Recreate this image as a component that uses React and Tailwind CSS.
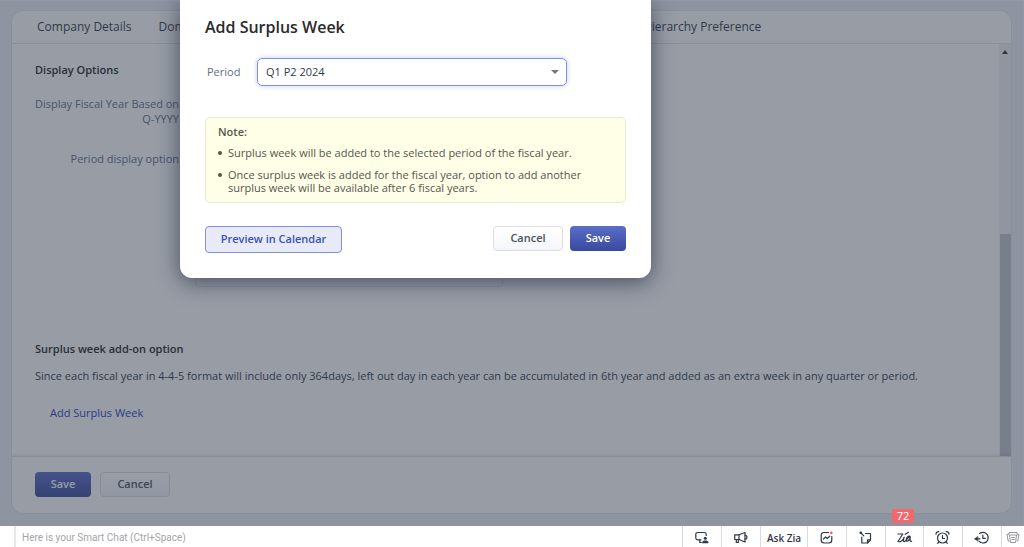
const tabs = [
  "Company Details",
  "Domain Mapping",
  "Fiscal Year",
  "Business Hours",
  "Holidays",
  "Currencies",
  "Hierarchy Preference",
];

function Stroke({ children, className = "" }) {
  return (
    <svg
      viewBox="0 0 16 16"
      className={`h-4 w-4 ${className}`}
      fill="none"
      stroke="currentColor"
      strokeWidth="1.2"
      strokeLinecap="round"
      strokeLinejoin="round"
      aria-hidden="true"
    >
      {children}
    </svg>
  );
}

const ScreenIcon = () => (
  <Stroke>
    <path d="M7 9.800H3.700C2.500 9.800 1.800 9.100 1.800 8V4.300C1.800 3.200 2.500 2.500 3.700 2.500H10.300C11.500 2.500 12.200 3.200 12.200 4.300V5.500" />
    <path d="M5.800 10V12.500H7.500" />
    <circle cx="11.300" cy="8.300" r="1.500" fill="currentColor" stroke="none" />
    <path d="M8.300 13.300V12.300C8.300 11 9.500 10.400 11.300 10.400S14.300 11 14.300 12.300V13.300Z" fill="currentColor" stroke="none" />
  </Stroke>
);

const MegaphoneIcon = () => (
  <Stroke>
    <path d="M1.700 4.800H6L12 2.500V12L6 9.500H1.700Z" />
    <path d="M6 4.800V9.500M3.300 9.800V12.500H5.300V10M12.200 5.300C14.600 5.300 14.600 9.200 12.200 9.200" />
  </Stroke>
);

const ChartIcon = () => (
  <Stroke>
    <path d="M9.500 2.500H5.200C3.200 2.500 2.200 3.500 2.200 5.500V10C2.200 12 3.200 13 5.200 13H9.800C11.800 13 12.800 12 12.800 10V6.500" />
    <path d="M4.500 9L6.600 7L8.300 8.500L10.700 6.200" />
    <circle cx="12.300" cy="2.900" r="1.400" fill="#f0646c" stroke="none" />
  </Stroke>
);

const NoteIcon = () => (
  <Stroke>
    <path d="M7.500 3.500H12.500V10L9.500 13H3.800V7" />
    <path d="M12.500 9.800H9.500V12.800M2.500 2.500L5.800 5.800" />
    <circle cx="2.800" cy="2.800" r="1.300" fill="currentColor" stroke="none" />
  </Stroke>
);

const ZiaIcon = () => (
  <Stroke>
    <path d="M1 4H5.800L1 11.500C3.500 12.500 6 10.500 7.200 7.200C6.300 9.500 6 11.600 7.200 11.600C8.800 11.600 10 8 13 6.300C10.800 5.800 9.200 8 9.200 10C9.400 12.400 12.400 11 13.300 6.800C12.700 10 13 11.800 14.600 11.200" />
    <path d="M8.200 4.300L11.500 2.300" />
  </Stroke>
);

const AlarmIcon = () => (
  <Stroke>
    <circle cx="7.500" cy="8" r="5" />
    <path d="M7.500 5.500V8.500H9.500M1 4.200C1 2.500 2.200 1.500 3.800 1.700M14 4.200C14 2.500 12.800 1.500 11.200 1.700M3.800 12L2.700 13.300M11.200 12L12.300 13.300" />
  </Stroke>
);

const HistoryIcon = () => (
  <Stroke>
    <path d="M5.500 3.500C6.600 2.700 7.800 2.400 9 2.400A5.300 5.300 0 1 1 5 11.200" />
    <path d="M8.800 5V8.300H11.300" />
    <path d="M1 8.800H6" />
    <path d="M3.600 6.500L0.800 8.800L3.600 11.100Z" fill="currentColor" strokeWidth="0.5" />
  </Stroke>
);

const CardsIcon = () => (
  <svg viewBox="0 0 16 16" className="h-4 w-4" fill="none" stroke="currentColor" strokeWidth="0.9" aria-hidden="true">
    <path d="M4.500 5H11.500L10.500 12.500H5.500Z" fill="#fff" />
    <path d="M4.500 11H3.200L2 4.500L4 4M11.500 11H12.800L14 4.500L12 4M4 4.500V2.500H12V4.500M6.200 7.500H9.800M6.400 9.500H9.600" />
  </svg>
);

const tools = [
  { label: "Screen share", width: "w-[39px]", icon: <ScreenIcon /> },
  { label: "Announcements", width: "w-[39px]", icon: <MegaphoneIcon /> },
  { label: "Ask Zia", width: "w-[47px]", text: true },
  { label: "Insights", width: "w-[39px]", icon: <ChartIcon /> },
  { label: "Sticky note", width: "w-[39px]", icon: <NoteIcon /> },
  { label: "Zia", width: "w-[38px]", icon: <ZiaIcon />, badge: 72 },
  { label: "Reminders", width: "w-[39px]", icon: <AlarmIcon /> },
  { label: "Recent items", width: "w-[39px]", icon: <HistoryIcon /> },
];

const primary =
  "h-[25px] w-14 rounded bg-linear-to-b from-[#5a6dc9] to-[#394a9c] text-[11px] font-semibold text-white";
const secondary =
  "h-[25px] w-[70px] rounded border border-[#dcdde6] bg-linear-to-b from-white to-[#f5f6fb] text-[11px] font-semibold text-[#4a5160]";

function SettingsPage() {
  return (
    <div className="flex min-h-0 flex-1 flex-col border-t border-r border-[#f5f7ff] bg-[#edeef5] pt-[9px] pr-[11px] pb-3 pl-[11px]">
      <div className="flex min-h-0 flex-1 flex-col overflow-hidden rounded-xl border border-[#e2e4ec] bg-white">
        <nav className="flex h-[33px] shrink-0 items-center gap-[27px] border-b border-[#e2e4ec] px-[25px]">
          {tabs.map((tab) => (
            <a key={tab} href="#" className="whitespace-nowrap text-xs text-[#313949]">
              {tab}
            </a>
          ))}
        </nav>
        <div className="flex min-h-0 flex-1">
          <main className="min-w-0 flex-1 overflow-hidden px-[23px] pt-[18px]">
            <h2 className="text-[11px] leading-4 font-semibold text-[#222222]">Display Options</h2>
            <dl className="mt-[18px] w-[144px] text-right text-[11px] leading-[15px] text-[#616e88]">
              <dt>
                <span className="whitespace-nowrap">Display Fiscal Year Based on</span> Q-YYYY
              </dt>
              <dt className="mt-[25px]">Period display option</dt>
            </dl>
            <div className="mt-7 ml-[160px] h-[93px] w-[308px] rounded border border-[#e6e8f0]" />
            <h2 className="mt-[54px] text-[11px] leading-4 font-semibold text-[#222222]">
              Surplus week add-on option
            </h2>
            <p className="mt-[11px] text-[11px] leading-4 text-[#313949]">
              Since each fiscal year in 4-4-5 format will include only 364days, left out day in each year can be
              accumulated in 6th year and added as an extra week in any quarter or period.
            </p>
            <button className="mt-[21px] ml-[15px] block text-[11px] leading-4 font-medium text-[#1f3ac4]">
              Add Surplus Week
            </button>
          </main>
          <div className="flex w-3 flex-col items-center bg-[#f0f1f5] pt-[6px]">
            <svg viewBox="0 0 6 4" className="h-1 w-1.5" aria-hidden="true">
              <path d="M0 4L3 0L6 4Z" fill="#333" />
            </svg>
            <div className="mt-auto h-[222px] w-[11px] bg-[#c0c2c9]" />
          </div>
        </div>
        <footer className="flex h-[57px] shrink-0 items-center gap-[9px] border-t border-[#dcdee8] px-[23px] pb-0.5 shadow-[0_-1px_4px_rgba(0,0,0,0.12)]">
          <button className={primary}>Save</button>
          <button className={secondary}>Cancel</button>
        </footer>
      </div>
    </div>
  );
}

function SurplusWeekDialog() {
  return (
    <div
      role="dialog"
      aria-labelledby="dialog-title"
      className="ml-[180px] w-full max-w-[471px] rounded-b-xl bg-white px-[25px] pt-4 pb-[25px] shadow-[0_4px_22px_rgba(30,35,60,0.65)]"
    >
      <h1 id="dialog-title" className="text-base leading-[22px] font-semibold text-[#2a2a2a]">
        Add Surplus Week
      </h1>
      <div className="mt-5 flex items-center">
        <label htmlFor="period" className="w-[52px] pl-0.5 text-[11px] text-[#616e88]">
          Period
        </label>
        <div className="relative w-[310px]">
          <select
            id="period"
            className="block h-[28px] w-full appearance-none rounded-[5px] border border-[#7f92e8] bg-white px-2 text-[11px] text-[#313949] shadow-[0_0_5px_rgba(90,115,240,0.35)] outline-none"
          >
            <option>Q1 P2 2024</option>
          </select>
          <svg
            viewBox="0 0 8 4"
            className="pointer-events-none absolute top-3 right-2 h-1 w-2"
            aria-hidden="true"
          >
            <path d="M0 0H8L4 4Z" fill="#777" />
          </svg>
        </div>
      </div>
      <section className="mt-[31px] rounded-[5px] border border-[#e9ebc9] bg-[#ffffe8] px-3 pt-[7px] pb-2 text-[11px] leading-[13px] text-[#55564a]">
        <h2 className="font-semibold">Note:</h2>
        <ul className="mt-2 space-y-[9px]">
          <li className="flex gap-[6px]">
            <span className="mt-[5px] h-1 w-1 shrink-0 rounded-full bg-[#55564a]" />
            Surplus week will be added to the selected period of the fiscal year.
          </li>
          <li className="flex gap-[6px] pr-5">
            <span className="mt-[5px] h-1 w-1 shrink-0 rounded-full bg-[#55564a]" />
            Once surplus week is added for the fiscal year, option to add another surplus week will be available
            after 6 fiscal years.
          </li>
        </ul>
      </section>
      <div className="mt-[23px] flex items-start gap-[7px]">
        <button className="mr-auto h-[27px] w-[137px] rounded border border-[#7f90dd] bg-[#e8ebf7] text-[11px] font-semibold text-[#3a50b8]">
          Preview in Calendar
        </button>
        <button className={secondary}>Cancel</button>
        <button className={primary}>Save</button>
      </div>
    </div>
  );
}

function ChatBar() {
  return (
    <div className="flex h-[21px] shrink-0 bg-white">
      <div className="w-4 border-r-2 border-[#e8e8ea]" />
      <input
        aria-label="Smart Chat"
        placeholder="Here is your Smart Chat (Ctrl+Space)"
        className="min-w-0 flex-1 px-1.5 pt-0.5 font-['Roboto','Liberation_Sans',sans-serif] text-[10px] outline-none placeholder:text-[#a4a4a8]"
      />
      {tools.map((tool) => (
        <button
          key={tool.label}
          aria-label={tool.label}
          className={`relative flex items-center justify-center border-l border-[#d9dae0] pt-[3px] text-[#2f3646] ${tool.width}`}
        >
          {tool.text ? <span className="text-[10px] font-semibold whitespace-nowrap">{tool.label}</span> : tool.icon}
          {tool.badge && (
            <span className="absolute -top-[17px] left-1.5 flex h-[14px] w-[22px] items-center justify-center rounded-xs bg-[#f0696e] text-[11px] font-medium text-white">
              {tool.badge}
            </span>
          )}
        </button>
      ))}
      <button
        aria-label="Cards"
        className="flex w-[23px] items-center justify-center border-l border-[#d9dae0] pt-0.5 text-[#8a8a8e]"
      >
        <CardsIcon />
      </button>
    </div>
  );
}

export default function App() {
  return (
    <div className="flex h-screen flex-col font-['Open_Sans','Liberation_Sans',sans-serif]">
      <div className="relative flex min-h-0 flex-1 flex-col">
        <SettingsPage />
        <div className="absolute inset-0 flex items-start overflow-hidden bg-[#2f394b]/50">
          <SurplusWeekDialog />
        </div>
      </div>
      <ChatBar />
    </div>
  );
}
